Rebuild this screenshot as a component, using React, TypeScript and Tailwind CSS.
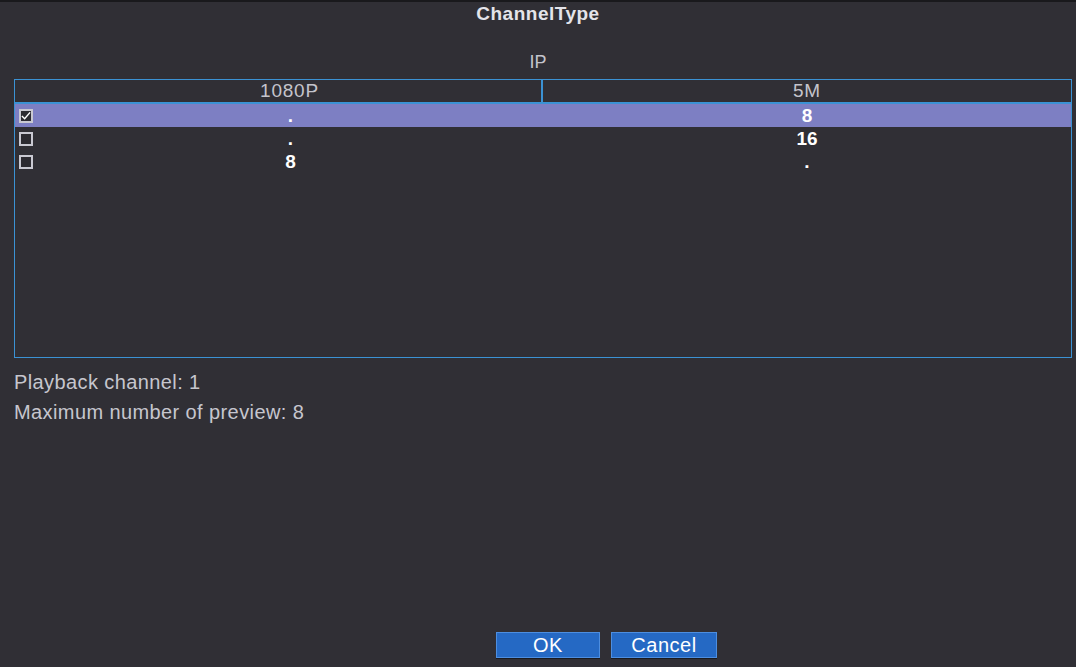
const rows = [
  { checked: true, a: '.', b: '8' },
  { checked: false, a: '.', b: '16' },
  { checked: false, a: '8', b: '.' },
]

function CheckBox({ checked }: { checked: boolean }) {
  return (
    <div className="w-[14px] h-[14px] border-2 border-[#c9c9d2] bg-[#2c2b31] flex items-center justify-center">
      {checked && (
        <svg width="11" height="10" viewBox="0 0 11 10">
          <path d="M1 5 L4 8 L10 1" stroke="#ffffff" strokeWidth="1.6" fill="none" />
        </svg>
      )}
    </div>
  )
}

export default function App() {
  return (
    <div
      className="w-[1076px] h-[667px] bg-[#302f35] flex flex-col text-[#cfcfd6]"
      style={{ fontFamily: '"Liberation Sans", Arial, sans-serif' }}
    >
      <div className="h-[2px] bg-[#19191c]" />
      <div className="h-[24px] flex items-center justify-center text-[19px] font-bold text-[#e4e4ea] tracking-[0.5px]">
        ChannelType
      </div>

      <div className="mt-[23px] mb-[4px] h-[26px] flex items-center justify-center text-[18px] text-[#c4c4cc]">
        IP
      </div>

      {/* table */}
      <div className="ml-[14px] w-[1058px] h-[279px] border border-[#3b92d4] flex flex-col">
        <div className="h-[22px] grid grid-cols-[505px_1fr] pl-[23px] text-[19px] leading-[22px] text-[#c4c4cc] tracking-[0.8px]">
          <div className="text-center border-r-2 border-[#3b92d4]">1080P</div>
          <div className="text-center">5M</div>
        </div>
        <div className="h-[2px] bg-[#3b92d4]" />
        {rows.map((r, i) => (
          <div
            key={i}
            className={`h-[23px] grid grid-cols-[23px_505px_1fr] items-center text-[19px] font-bold text-white ${
              r.checked ? 'bg-[#7d7fc3]' : ''
            }`}
          >
            <div className="pl-[4px]">
              <CheckBox checked={r.checked} />
            </div>
            <div className="text-center leading-[23px]">{r.a}</div>
            <div className="text-center leading-[23px]">{r.b}</div>
          </div>
        ))}
      </div>

      <div className="mt-[13px] ml-[14px] flex flex-col gap-[8px] text-[20px] text-[#c6c6ce] tracking-[0.4px]">
        <div className="h-[22px] leading-[22px]">Playback channel: 1</div>
        <div className="h-[22px] leading-[22px]">Maximum number of preview: 8</div>
      </div>

      <div className="flex-1" />

      <div className="flex justify-center gap-[11px] pl-[137px] mb-[9px]">
        <button className="w-[104px] h-[26px] bg-[#2569c4] border border-[#4d8ee0] text-white text-[20px] leading-none tracking-[0.5px] shadow-[0_1px_0_#1a1a1f]">
          OK
        </button>
        <button className="w-[106px] h-[26px] bg-[#2569c4] border border-[#4d8ee0] text-white text-[20px] leading-none tracking-[0.5px] shadow-[0_1px_0_#1a1a1f]">
          Cancel
        </button>
      </div>
    </div>
  )
}
